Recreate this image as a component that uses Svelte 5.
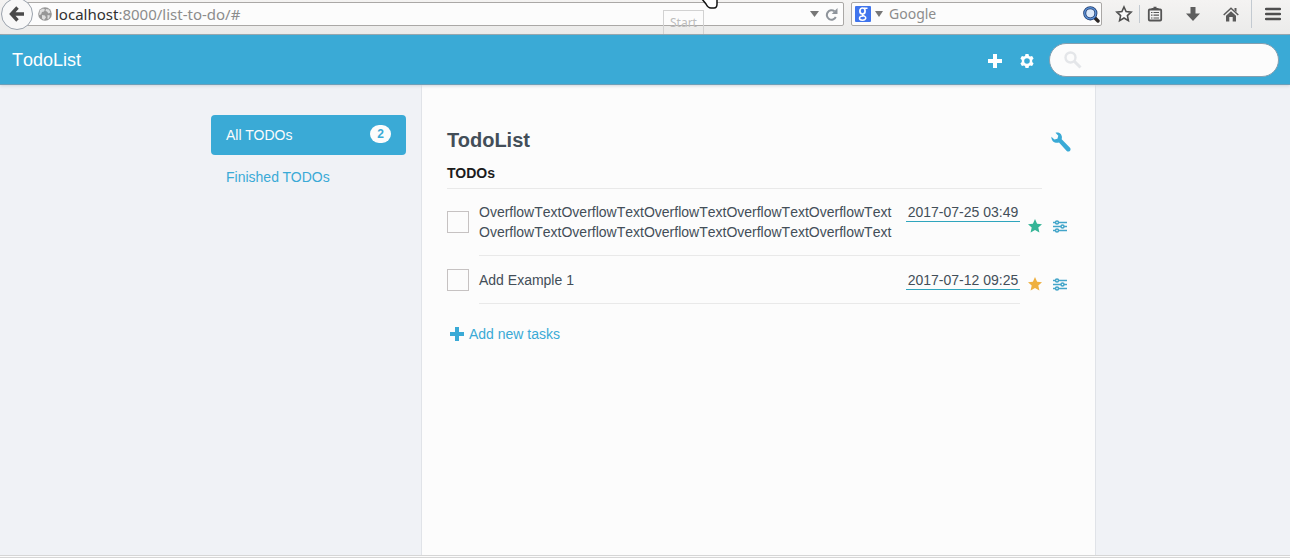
<script>
  const accent = '#3aaad6';
  const longLine = 'OverflowText'.repeat(5);
  let address = $state('localhost:8000/list-to-do/#');
  let tasks = $state([
    { id: 1, title: longLine + '\n' + longLine, due: '2017-07-25 03:49', star: '#35b597', done: false },
    { id: 2, title: 'Add Example 1', due: '2017-07-12 09:25', star: '#efb03f', done: false }
  ]);
  let host = $derived(address.split('/')[0].split(':')[0]);
  let rest = $derived(address.slice(host.length));
</script>

{#snippet plus(size)}
  <svg width={size} height={size} viewBox="0 0 14 14" aria-hidden="true"><path d="M5 0h4v5h5v4H9v5H5V9H0V5h5z" fill="currentColor" /></svg>
{/snippet}

<div class="window">
  <div class="browser">
    <button class="back" aria-label="Back">
      <svg width="16" height="16" viewBox="0 0 16 16"><path d="M8.500 1.500L2.500 8l6 6.500M3 8h12" fill="none" stroke="#4a4a4a" stroke-width="3.400" /></svg>
    </button>
    <div class="address">
      <svg width="14" height="14" viewBox="0 0 14 14" aria-hidden="true">
        <circle cx="7" cy="7" r="6.800" fill="#979797" />
        <path d="M2 3l3-1.500 2 1-1 2-2 .5-1 2.500-2 .5zM8 2l3 .5 1.500 3-2 1-1.500-2-1.500-.5zM4 8l3 .5 1 2-2 2.500-2-1.500zM9.500 8l2.500.5-1 3-1.500.5z" fill="#dedede" />
      </svg>
      <a class="url" href="#top"><b>{host}</b>{rest}</a>
      <button class="bare" aria-label="Show history"><svg width="9" height="6" viewBox="0 0 9 6"><path d="M0 0h9L4.500 6z" fill="#777" /></svg></button>
      <button class="bare" aria-label="Reload">
        <svg width="13" height="13" viewBox="0 0 13 13"><path d="M9.500 3.300A4.700 4.700 0 1 0 10.800 9" fill="none" stroke="#8e949b" stroke-width="2" /><path d="M12.500 0v6H6.700z" fill="#8e949b" /></svg>
      </button>
    </div>
    <div class="engine">
      <svg width="16" height="16" viewBox="0 0 16 16" aria-hidden="true">
        <rect width="16" height="16" rx="1" fill="#3f74ed" />
        <ellipse cx="7.500" cy="5" rx="2.600" ry="3" fill="none" stroke="#fff" stroke-width="1.700" />
        <path d="M9 2.300h3.500M8 8c-2 1.600 3.300 2 2.800 4.200-.6 2.700-6.300 2.500-6.300.1 0-1.800 2.200-2.200 4-2.200" fill="none" stroke="#fff" stroke-width="1.500" />
      </svg>
      <svg width="8" height="6" viewBox="0 0 8 6" aria-hidden="true"><path d="M0 0h8L4 6z" fill="#777" /></svg>
      <input type="text" placeholder="Google" aria-label="Search with Google" />
      <button class="bare" aria-label="Search">
        <svg width="17" height="17" viewBox="0 0 17 17"><path d="M11 11l4 4" stroke="#2c2725" stroke-width="3.400" stroke-linecap="round" /><circle cx="7.300" cy="7.300" r="5.600" fill="#dce9fa" stroke="#1d3a6c" stroke-width="3" /><circle cx="7.300" cy="7.300" r="5.600" fill="none" stroke="#5b8fd4" stroke-width="1.400" /></svg>
      </button>
    </div>
    <div class="tools">
      <button class="bare" aria-label="Bookmark this page"><svg width="18" height="18" viewBox="0 0 18 18"><path d="M9 2l2.100 4.600 5 .6-3.700 3.400 1 5L9 13l-4.400 2.600 1-5L1.900 7.200l5-.6z" fill="#fafafa" stroke="#4f4f4f" stroke-width="1.600" /></svg></button>
      <i></i>
      <button class="bare" aria-label="Bookmarks">
        <svg width="16" height="16" viewBox="0 0 16 16"><rect x="1.800" y="3.500" width="12.400" height="11" rx="1" fill="#f2f2f2" stroke="#555" stroke-width="1.800" /><path d="M4.500 4V2h2V.800h3V2h2v2z" fill="#555" /><path d="M4 6.500h1.500m1 0H12M4 9.200h1.500m1 0H12M4 12h1.500m1 0H12" stroke="#555" stroke-width="1.200" /></svg>
      </button>
      <button class="bare download" aria-label="Downloads"><svg width="14" height="14" viewBox="0 0 14 14"><path d="M4.500 0h5v6.500H14L7 14 0 6.500h4.500z" fill="#5e5e5e" /></svg></button>
      <button class="bare home" aria-label="Home"><svg width="16" height="15" viewBox="0 0 16 15"><path d="M.7 8L8 1.300 15.300 8" fill="none" stroke="#5a5a5a" stroke-width="1.500" /><path d="M3 8.800l5-4.600 5 4.600V14.500H9.700V10H6.300v4.500H3zM11.500 1h2v4l-2-1.800z" fill="#5a5a5a" /></svg></button>
      <i class="tall"></i>
      <button class="bare" aria-label="Open menu"><svg width="16" height="14" viewBox="0 0 16 14"><path d="M1 2h14M1 7h14M1 12h14" stroke="#4f4f4f" stroke-width="2.400" stroke-linecap="round" /></svg></button>
    </div>
    <span class="tip">Start</span>
    <svg class="pointer" width="20" height="10" viewBox="0 0 20 10" aria-hidden="true"><path d="M1-1l4 5c1 2 2 4 5 4h3c2 0 3-2 3-4v-5" fill="#fff" stroke="#111" stroke-width="1.500" /></svg>
  </div>

  <header>
    <a class="brand" href="#top">TodoList</a>
    <button class="bare" aria-label="Add list">{@render plus(14)}</button>
    <button class="bare" aria-label="Settings">
      <svg width="14" height="14" viewBox="0 0 14 14"><path fill="#fff" fill-rule="evenodd" d="M5.500 0h3l.5 2 1.100.6 2-.6 1.500 2.600L12.200 6v2l1.400 1.400L12.100 12l-2-.6L9 12l-.5 2h-3L5 12l-1.100-.6-2 .6L.4 9.400 1.800 8V6L.4 4.600 1.900 2l2 .6L5 2zM7 4.200a2.800 2.800 0 1 0 0 5.600 2.800 2.800 0 0 0 0-5.600z" /></svg>
    </button>
    <label class="search">
      <svg width="18" height="18" viewBox="0 0 18 18" aria-hidden="true"><circle cx="6.500" cy="6.500" r="5" fill="none" stroke="#e4e6e9" stroke-width="2.400" /><path d="M10.500 10.500l6 6" stroke="#e4e6e9" stroke-width="3" /></svg>
      <input type="search" aria-label="Search tasks" />
    </label>
  </header>

  <div class="page">
    <nav>
      <a class="active" href="#all">All TODOs <span>{tasks.length}</span></a>
      <a href="#finished">Finished TODOs</a>
    </nav>
    <main>
      <div class="title">
        <h1>TodoList</h1>
        <button class="bare" aria-label="Edit list">
          <svg width="20" height="20" viewBox="0 0 20 20"><path d="M4.500.7C7.800-.5 11.200 2 10.900 5.700l-.2 1.500 8.300 8.500c1.800 2.200-1.100 5-3.300 3.300L8 10.500C4 11.700.2 9.200.4 4.800l3 2.600 3-.7.900-3z" fill={accent} /></svg>
        </button>
      </div>
      <h2>TODOs</h2>
      <ul>
        {#each tasks as task (task.id)}
          <li>
            <input type="checkbox" id="task-{task.id}" bind:checked={task.done} />
            <div class="body">
              <label for="task-{task.id}">{task.title}</label>
              <time>{task.due}</time>
            </div>
            <button class="bare mark" aria-label="Priority"><svg width="14" height="14" viewBox="0 0 14 14"><path d="M7 0l2.100 4.700 4.900.5-3.700 3.400 1.100 5L7 11.100l-4.400 2.500 1.100-5L0 5.200l4.900-.5z" fill={task.star} /></svg></button>
            <button class="bare mark" aria-label="Task options">
              <svg width="16" height="13" viewBox="0 0 16 13"><g fill="#fcfcfc" stroke="#43a5c9" stroke-width="1.500"><path d="M1 2.500h14M1 6.500h14M1 10.500h14" /><circle cx="5" cy="2.500" r="1.500" /><circle cx="10.500" cy="6.500" r="1.500" /><circle cx="5" cy="10.500" r="1.500" /></g></svg>
            </button>
          </li>
        {/each}
      </ul>
      <button class="bare add">{@render plus(14)}Add new tasks</button>
    </main>
  </div>
  <footer></footer>
</div>

<style>
  :global(body) { background: #f0f2f6; }
  .window {
    min-height: 100vh;
    display: flex;
    flex-direction: column;
    font: 14px/20px "Liberation Sans", Arial, sans-serif;
    color: #434e58;
  }
  .window * { box-sizing: border-box; }
  a { color: inherit; text-decoration: none; }
  svg { display: block; flex: none; }
  .bare { display: flex; align-items: center; padding: 0; border: 0; background: none; font: inherit; color: inherit; }
  input[type="text"], input[type="search"] { flex: 1; min-width: 0; padding: 0; border: 0; outline: 0; background: none; font: inherit; color: inherit; }

  .browser {
    position: relative;
    display: flex;
    height: 35px;
    padding: 2px 9px 0 1px;
    background: linear-gradient(#f4f3f2, #ebebea);
    border-bottom: 1px solid #8b9ea6;
    font: 14px/20px "Noto Sans", sans-serif;
    overflow: hidden;
  }
  .back {
    z-index: 1;
    display: flex;
    align-items: center;
    justify-content: center;
    width: 32px;
    height: 32px;
    margin: -4px -16px 0 0;
    padding: 0;
    border: 1px solid #9aa2ac;
    border-radius: 50%;
    background: #f8f8f8;
  }
  .address, .engine {
    display: flex;
    align-items: center;
    height: 24px;
    border: 1px solid #aaa8a6;
    border-radius: 2px;
    background: #fcfcfc;
  }
  .address { flex: 1; gap: 6px; padding: 0 5px 0 20px; }
  .url { flex: 1; margin-left: -3px; font-size: 15px; color: #8c8c8c; }
  .url b { font-weight: 400; color: #303030; }
  .engine { width: 251px; margin-left: 7px; padding: 0 1px 0 3px; gap: 4px; color: #888; }
  .engine input { margin-left: 2px; }
  .engine input::placeholder { color: #8c8c8c; opacity: 1; }
  .tools { display: flex; align-items: center; height: 24px; margin-left: 13px; }
  .tools i { width: 1px; height: 18px; margin: 0 7px 0 6px; background: #c3cad1; }
  .tools i.tall { height: 28px; margin: 0 13px 0 12px; }
  .download { margin-left: 23px; }
  .home { margin-left: 23px; }
  .tip {
    position: absolute;
    left: 663px;
    top: 10px;
    width: 41px;
    height: 25px;
    border: 1px solid #d2d2d2;
    font-size: 12px;
    line-height: 24px;
    text-align: center;
    color: #bdbdbd;
  }
  .pointer { position: absolute; left: 701px; top: 0; }

  header {
    display: flex;
    align-items: center;
    height: 50px;
    padding: 0 11px 0 12px;
    background: #3aaad6;
    border-bottom: 1px solid #6e9fb8;
    box-shadow: 0 1px 3px #cfd4da;
    color: #fff;
    z-index: 1;
  }
  .brand { flex: 1; font-size: 18px; font-kerning: none; }
  header .bare { margin: 3px 18px 0 0; }
  header .bare + .bare { margin-right: 15px; }
  .search { display: flex; align-items: center; width: 230px; height: 34px; padding: 0 14px; border: 1px solid #859fb0; border-radius: 17px; background: #fcfcfc; color: #434e58; }

  .page { flex: 1; display: grid; grid-template-columns: 421fr 675fr 194fr; }
  nav { justify-self: end; width: 195px; margin: 30px 15px 0 0; color: #3aaad6; }
  nav a { display: flex; justify-content: space-between; height: 40px; margin-bottom: 2px; padding: 10px 15px; border-radius: 4px; }
  nav .active { background: #3aaad6; color: #fcfcfc; }
  nav span { width: 21px; height: 18px; border-radius: 9px; background: #fcfcfc; color: #3aaad6; font-size: 12px; font-weight: 700; line-height: 18px; text-align: center; }

  main { min-width: 0; padding: 42px 24px 0 25px; border: solid #e0e3e8; border-width: 0 1px; background: #fcfcfc; }
  .title { display: flex; justify-content: space-between; align-items: center; height: 26px; }
  .title .bare { margin-top: 3px; }
  h1 { margin: 0; font-size: 20px; line-height: 24px; }
  h2 { margin: 10px 29px 0 0; padding-bottom: 5px; border-bottom: 1px solid #e9e9e9; font-size: 14px; line-height: 20px; color: #1c1c1c; }
  ul { margin: -1px 0 0; padding: 0; list-style: none; }
  li { display: flex; align-items: center; padding-right: 3px; }
  li input { appearance: none; flex: none; width: 22px; height: 22px; margin: 0 10px 0 0; border: 1px solid #c6c2c2; background: #fcfcfc; }
  li input:checked { background: #3aaad6; }
  .body { flex: 1; min-width: 0; display: flex; align-items: flex-start; gap: 6px; padding: 14px 0 13px; border-bottom: 1px solid #e9e9e9; font-kerning: none; }
  .body label { flex: 1; min-width: 0; white-space: pre-line; }
  time { flex: none; width: 114px; text-align: center; box-shadow: inset 0 -1px #2fa5bd; }
  .mark { margin: 8px 0 0 8px; }
  .mark + .mark { margin-left: 10px; }
  .add { gap: 5px; margin: 20px 0 0 3px; color: #3aaad6; }
  footer { height: 3px; border: solid #d6d6d6; border-width: 1px 0; background: #fcfcfc; }
</style>
